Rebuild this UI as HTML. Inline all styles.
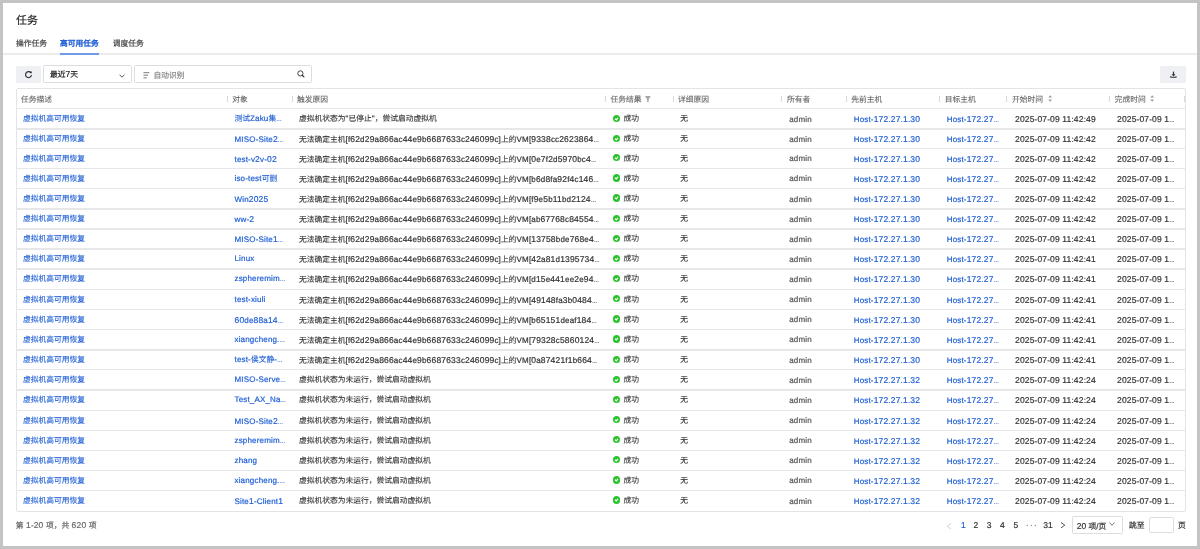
<!DOCTYPE html><html lang="zh-CN"><head><meta charset="utf-8"><style>
*{margin:0;padding:0;box-sizing:border-box}
html,body{width:1200px;height:549px;overflow:hidden;background:#c4c4c4;font-family:"Liberation Sans",sans-serif;text-rendering:geometricPrecision}
#root{position:absolute;left:0;top:0;width:1200px;height:549px;will-change:transform}
#pg{position:absolute;left:3px;top:3px;width:1194px;height:543px;background:#fff;}
.a{position:absolute;white-space:nowrap;-webkit-text-stroke:0.2px}
.t{font-size:8px;line-height:20px;height:20px;}
.t{letter-spacing:0.17px;-webkit-text-stroke:0.2px}
.c{font-size:7.75px;letter-spacing:0}
.t .c{-webkit-text-stroke:0.1px}
.el{font-size:7px;letter-spacing:-0.25px;opacity:.8}
.d{font-size:8.5px}
.lk{color:#1f5fd6}
.dk{color:#333}
.hd{color:#666}
.ad{color:#555;padding-top:0.5px}
.sep{position:absolute;width:1px;height:6px;background:#d8d8d8}
.hl{position:absolute;left:16px;width:1170px;height:1.3px;background:#e7e7e9}
</style></head><body><div id="root">
<div id="pg"></div>
<div class="a" style="left:16px;top:11px;font-size:11px;line-height:20px;color:#222;-webkit-text-stroke:0.15px">任务</div>
<div class="a" style="left:16px;top:34px;font-size:8px;line-height:20px;color:#444;"><span class="c">操作任务</span></div>
<div class="a" style="left:60px;top:34px;font-size:8px;line-height:20px;color:#1f5fd6;-webkit-text-stroke:0.4px"><span class="c">高可用任务</span></div>
<div class="a" style="left:112.7px;top:34px;font-size:8px;line-height:20px;color:#444;"><span class="c">调度任务</span></div>
<div class="a" style="left:3px;top:53.3px;width:1194px;height:1.5px;background:#ececec"></div>
<div class="a" style="left:60px;top:53px;width:39px;height:1.5px;background:#6f9be8"></div>
<div class="a" style="left:16px;top:65.5px;width:25px;height:17.5px;background:#eff0f4;border-radius:1.5px"></div>
<svg class="a" style="left:24px;top:70.3px" width="9" height="9" viewBox="0 0 9 9"><path d="M7.2 3.2A3 3 0 1 0 7.5 5.2" fill="none" stroke="#333" stroke-width="1.15"/><path d="M5.6 1.6L7.8 1.4L7.6 3.6Z" fill="#333"/></svg>
<div class="a" style="left:43.2px;top:65.25px;width:88.6px;height:18px;border:1px solid #dcdde0;border-radius:1.5px"></div>
<div class="a" style="left:50px;top:64.4px;font-size:8px;line-height:20px;color:#222;"><span class="c">最近</span><span class="d">7</span><span class="c">天</span></div>
<svg class="a" style="left:118.5px;top:73.5px" width="6" height="4" viewBox="0 0 6 4"><path d="M0.5 0.7L3 3.2L5.5 0.7" fill="none" stroke="#444" stroke-width="0.9"/></svg>
<div class="a" style="left:134.2px;top:65.25px;width:178px;height:18px;border:1px solid #dcdde0;border-radius:1.5px"></div>
<svg class="a" style="left:142.5px;top:71.5px" width="7" height="7" viewBox="0 0 7 7"><path d="M0.5 0.7H6.3M0.5 3.2H5M0.5 5.8H3.6" fill="none" stroke="#555" stroke-width="0.8"/></svg>
<div class="a" style="left:153.5px;top:65.6px;font-size:8px;line-height:20px;color:#888;"><span class="c">自动识别</span></div>
<svg class="a" style="left:296.5px;top:69.8px" width="8" height="8" viewBox="0 0 8 8"><circle cx="3.4" cy="3.4" r="2.6" fill="none" stroke="#333" stroke-width="0.9"/><path d="M5.2 5.2L6.9 6.9" stroke="#333" stroke-width="1.25" stroke-linecap="round"/></svg>
<div class="a" style="left:1160px;top:65.5px;width:25.5px;height:17.5px;background:#eff0f4;border-radius:1.5px"></div>
<svg class="a" style="left:1169.5px;top:70.5px" width="7" height="8" viewBox="0 0 7 8"><path d="M3.5 0.6V4.2" stroke="#333" stroke-width="1.2"/><path d="M1.5 3.3L3.5 5.6L5.5 3.3Z" fill="#333"/><path d="M0.8 5.3V6.3H6V5.3" fill="none" stroke="#333" stroke-width="1.1"/></svg>
<div class="a" style="left:15.5px;top:88px;width:1170.5px;height:423.5px;border:1px solid #e3e4e7;border-radius:2px"></div>
<div class="a t hd" style="left:21px;top:89.9px"><span class="c">任务描述</span></div>
<div class="sep" style="left:227.0px;top:96px"></div>
<div class="a t hd" style="left:232.3px;top:89.9px"><span class="c">对象</span></div>
<div class="sep" style="left:291.5px;top:96px"></div>
<div class="a t hd" style="left:297px;top:89.9px"><span class="c">触发原因</span></div>
<div class="sep" style="left:604.5px;top:96px"></div>
<div class="a t hd" style="left:610.5px;top:89.9px"><span class="c">任务结果</span></div>
<div class="sep" style="left:672.5px;top:96px"></div>
<div class="a t hd" style="left:678px;top:89.9px"><span class="c">详细原因</span></div>
<div class="sep" style="left:781.2px;top:96px"></div>
<div class="a t hd" style="left:787px;top:89.9px"><span class="c">所有者</span></div>
<div class="sep" style="left:845.8px;top:96px"></div>
<div class="a t hd" style="left:851.3px;top:89.9px"><span class="c">先前主机</span></div>
<div class="sep" style="left:938.7px;top:96px"></div>
<div class="a t hd" style="left:944.7px;top:89.9px"><span class="c">目标主机</span></div>
<div class="sep" style="left:1006.2px;top:96px"></div>
<div class="a t hd" style="left:1012px;top:89.9px"><span class="c">开始时间</span></div>
<div class="sep" style="left:1109.2px;top:96px"></div>
<div class="a t hd" style="left:1114.7px;top:89.9px"><span class="c">完成时间</span></div>
<div class="sep" style="left:1184.2px;top:96px"></div>
<svg class="a" style="left:645.3px;top:95.7px" width="6" height="6.2" viewBox="0 0 6 6.2"><path d="M0 0.1H5.8L3.7 3.4V6.1H2.1V3.4Z" fill="#a8a8a8"/></svg>
<svg class="a" style="left:1047.8px;top:95.1px" width="4.4" height="7" viewBox="0 0 4.4 7"><path d="M0.3 2.5L2.2 0.3L4.1 2.5ZM0.3 4.4L2.2 6.7L4.1 4.4Z" fill="#999"/></svg>
<svg class="a" style="left:1150px;top:95.1px" width="4.4" height="7" viewBox="0 0 4.4 7"><path d="M0.3 2.5L2.2 0.3L4.1 2.5ZM0.3 4.4L2.2 6.7L4.1 4.4Z" fill="#999"/></svg>
<div class="hl" style="top:108.15px"></div>
<div class="hl" style="top:128.25px"></div>
<div class="hl" style="top:147.75px"></div>
<div class="hl" style="top:167.85px"></div>
<div class="hl" style="top:188.05px"></div>
<div class="hl" style="top:208.35px"></div>
<div class="hl" style="top:228.45px"></div>
<div class="hl" style="top:248.45px"></div>
<div class="hl" style="top:268.35px"></div>
<div class="hl" style="top:288.75px"></div>
<div class="hl" style="top:308.85px"></div>
<div class="hl" style="top:328.85px"></div>
<div class="hl" style="top:349.25px"></div>
<div class="hl" style="top:369.15px"></div>
<div class="hl" style="top:389.45px"></div>
<div class="hl" style="top:409.65px"></div>
<div class="hl" style="top:429.65px"></div>
<div class="hl" style="top:449.75px"></div>
<div class="hl" style="top:469.85px"></div>
<div class="hl" style="top:490.05px"></div>
<div class="a t lk" style="left:23px;top:109.10px"><span class="c">虚拟机高可用恢复</span></div>
<div class="a t lk" style="left:234.5px;top:109.10px"><span class="c">测试</span>Zaku<span class="c">集</span><span class="el">...</span></div>
<div class="a t dk" style="left:299px;top:109.10px"><span class="c">虚拟机状态为</span>"<span class="c">已停止</span>"<span class="c">，尝试启动虚拟机</span></div>
<div class="a" style="left:612.8px;top:114.50px;width:7.4px;height:7.4px;border-radius:50%;background:#29c32b"></div><svg class="a" style="left:612.8px;top:114.50px" width="7.4" height="7.4" viewBox="0 0 7.4 7.4"><path d="M2 3.8L3.3 4.9L5 2.8" fill="none" stroke="#fff" stroke-width="1.2"/></svg>
<div class="a t dk" style="left:623.5px;top:109.10px"><span class="c">成功</span></div>
<div class="a t dk" style="left:680.3px;top:109.10px"><span class="c">无</span></div>
<div class="a t ad" style="left:789.2px;top:109.10px">admin</div>
<div class="a t lk" style="left:853.7px;top:109.10px">Host-<span class="d">172</span>.<span class="d">27</span>.<span class="d">1</span>.<span class="d">30</span></div>
<div class="a t lk" style="left:946.7px;top:109.10px">Host-<span class="d">172</span>.<span class="d">27</span><span class="el">...</span></div>
<div class="a t dk" style="left:1015px;top:109.10px"><span class="d">2025</span>-<span class="d">07</span>-<span class="d">09</span> <span class="d">11</span>:<span class="d">42</span>:<span class="d">49</span></div>
<div class="a t dk" style="left:1117px;top:109.10px"><span class="d">2025</span>-<span class="d">07</span>-<span class="d">09</span> <span class="d">1</span><span class="el">...</span></div>
<div class="a t lk" style="left:23px;top:129.20px"><span class="c">虚拟机高可用恢复</span></div>
<div class="a t lk" style="left:234.5px;top:129.20px">MISO-Site<span class="d">2</span><span class="el">...</span></div>
<div class="a t dk" style="left:299px;top:129.20px"><span class="c">无法确定主机</span>[f<span class="d">62</span>d<span class="d">29</span>a<span class="d">866</span>ac<span class="d">44</span>e<span class="d">9</span>b<span class="d">6687633</span>c<span class="d">246099</span>c]<span class="c">上的</span>VM[<span class="d">9338</span>cc<span class="d">2623864</span><span class="el">...</span></div>
<div class="a" style="left:612.8px;top:134.60px;width:7.4px;height:7.4px;border-radius:50%;background:#29c32b"></div><svg class="a" style="left:612.8px;top:134.60px" width="7.4" height="7.4" viewBox="0 0 7.4 7.4"><path d="M2 3.8L3.3 4.9L5 2.8" fill="none" stroke="#fff" stroke-width="1.2"/></svg>
<div class="a t dk" style="left:623.5px;top:129.20px"><span class="c">成功</span></div>
<div class="a t dk" style="left:680.3px;top:129.20px"><span class="c">无</span></div>
<div class="a t ad" style="left:789.2px;top:129.20px">admin</div>
<div class="a t lk" style="left:853.7px;top:129.20px">Host-<span class="d">172</span>.<span class="d">27</span>.<span class="d">1</span>.<span class="d">30</span></div>
<div class="a t lk" style="left:946.7px;top:129.20px">Host-<span class="d">172</span>.<span class="d">27</span><span class="el">...</span></div>
<div class="a t dk" style="left:1015px;top:129.20px"><span class="d">2025</span>-<span class="d">07</span>-<span class="d">09</span> <span class="d">11</span>:<span class="d">42</span>:<span class="d">42</span></div>
<div class="a t dk" style="left:1117px;top:129.20px"><span class="d">2025</span>-<span class="d">07</span>-<span class="d">09</span> <span class="d">1</span><span class="el">...</span></div>
<div class="a t lk" style="left:23px;top:148.70px"><span class="c">虚拟机高可用恢复</span></div>
<div class="a t lk" style="left:234.5px;top:148.70px">test-v<span class="d">2</span>v-<span class="d">02</span></div>
<div class="a t dk" style="left:299px;top:148.70px"><span class="c">无法确定主机</span>[f<span class="d">62</span>d<span class="d">29</span>a<span class="d">866</span>ac<span class="d">44</span>e<span class="d">9</span>b<span class="d">6687633</span>c<span class="d">246099</span>c]<span class="c">上的</span>VM[<span class="d">0</span>e<span class="d">7</span>f<span class="d">2</span>d<span class="d">5970</span>bc<span class="d">4</span><span class="el">...</span></div>
<div class="a" style="left:612.8px;top:154.10px;width:7.4px;height:7.4px;border-radius:50%;background:#29c32b"></div><svg class="a" style="left:612.8px;top:154.10px" width="7.4" height="7.4" viewBox="0 0 7.4 7.4"><path d="M2 3.8L3.3 4.9L5 2.8" fill="none" stroke="#fff" stroke-width="1.2"/></svg>
<div class="a t dk" style="left:623.5px;top:148.70px"><span class="c">成功</span></div>
<div class="a t dk" style="left:680.3px;top:148.70px"><span class="c">无</span></div>
<div class="a t ad" style="left:789.2px;top:148.70px">admin</div>
<div class="a t lk" style="left:853.7px;top:148.70px">Host-<span class="d">172</span>.<span class="d">27</span>.<span class="d">1</span>.<span class="d">30</span></div>
<div class="a t lk" style="left:946.7px;top:148.70px">Host-<span class="d">172</span>.<span class="d">27</span><span class="el">...</span></div>
<div class="a t dk" style="left:1015px;top:148.70px"><span class="d">2025</span>-<span class="d">07</span>-<span class="d">09</span> <span class="d">11</span>:<span class="d">42</span>:<span class="d">42</span></div>
<div class="a t dk" style="left:1117px;top:148.70px"><span class="d">2025</span>-<span class="d">07</span>-<span class="d">09</span> <span class="d">1</span><span class="el">...</span></div>
<div class="a t lk" style="left:23px;top:168.80px"><span class="c">虚拟机高可用恢复</span></div>
<div class="a t lk" style="left:234.5px;top:168.80px">iso-test<span class="c">可删</span></div>
<div class="a t dk" style="left:299px;top:168.80px"><span class="c">无法确定主机</span>[f<span class="d">62</span>d<span class="d">29</span>a<span class="d">866</span>ac<span class="d">44</span>e<span class="d">9</span>b<span class="d">6687633</span>c<span class="d">246099</span>c]<span class="c">上的</span>VM[b<span class="d">6</span>d<span class="d">8</span>fa<span class="d">92</span>f<span class="d">4</span>c<span class="d">146</span><span class="el">...</span></div>
<div class="a" style="left:612.8px;top:174.20px;width:7.4px;height:7.4px;border-radius:50%;background:#29c32b"></div><svg class="a" style="left:612.8px;top:174.20px" width="7.4" height="7.4" viewBox="0 0 7.4 7.4"><path d="M2 3.8L3.3 4.9L5 2.8" fill="none" stroke="#fff" stroke-width="1.2"/></svg>
<div class="a t dk" style="left:623.5px;top:168.80px"><span class="c">成功</span></div>
<div class="a t dk" style="left:680.3px;top:168.80px"><span class="c">无</span></div>
<div class="a t ad" style="left:789.2px;top:168.80px">admin</div>
<div class="a t lk" style="left:853.7px;top:168.80px">Host-<span class="d">172</span>.<span class="d">27</span>.<span class="d">1</span>.<span class="d">30</span></div>
<div class="a t lk" style="left:946.7px;top:168.80px">Host-<span class="d">172</span>.<span class="d">27</span><span class="el">...</span></div>
<div class="a t dk" style="left:1015px;top:168.80px"><span class="d">2025</span>-<span class="d">07</span>-<span class="d">09</span> <span class="d">11</span>:<span class="d">42</span>:<span class="d">42</span></div>
<div class="a t dk" style="left:1117px;top:168.80px"><span class="d">2025</span>-<span class="d">07</span>-<span class="d">09</span> <span class="d">1</span><span class="el">...</span></div>
<div class="a t lk" style="left:23px;top:189.00px"><span class="c">虚拟机高可用恢复</span></div>
<div class="a t lk" style="left:234.5px;top:189.00px">Win<span class="d">2025</span></div>
<div class="a t dk" style="left:299px;top:189.00px"><span class="c">无法确定主机</span>[f<span class="d">62</span>d<span class="d">29</span>a<span class="d">866</span>ac<span class="d">44</span>e<span class="d">9</span>b<span class="d">6687633</span>c<span class="d">246099</span>c]<span class="c">上的</span>VM[f<span class="d">9</span>e<span class="d">5</span>b<span class="d">11</span>bd<span class="d">2124</span><span class="el">...</span></div>
<div class="a" style="left:612.8px;top:194.40px;width:7.4px;height:7.4px;border-radius:50%;background:#29c32b"></div><svg class="a" style="left:612.8px;top:194.40px" width="7.4" height="7.4" viewBox="0 0 7.4 7.4"><path d="M2 3.8L3.3 4.9L5 2.8" fill="none" stroke="#fff" stroke-width="1.2"/></svg>
<div class="a t dk" style="left:623.5px;top:189.00px"><span class="c">成功</span></div>
<div class="a t dk" style="left:680.3px;top:189.00px"><span class="c">无</span></div>
<div class="a t ad" style="left:789.2px;top:189.00px">admin</div>
<div class="a t lk" style="left:853.7px;top:189.00px">Host-<span class="d">172</span>.<span class="d">27</span>.<span class="d">1</span>.<span class="d">30</span></div>
<div class="a t lk" style="left:946.7px;top:189.00px">Host-<span class="d">172</span>.<span class="d">27</span><span class="el">...</span></div>
<div class="a t dk" style="left:1015px;top:189.00px"><span class="d">2025</span>-<span class="d">07</span>-<span class="d">09</span> <span class="d">11</span>:<span class="d">42</span>:<span class="d">42</span></div>
<div class="a t dk" style="left:1117px;top:189.00px"><span class="d">2025</span>-<span class="d">07</span>-<span class="d">09</span> <span class="d">1</span><span class="el">...</span></div>
<div class="a t lk" style="left:23px;top:209.30px"><span class="c">虚拟机高可用恢复</span></div>
<div class="a t lk" style="left:234.5px;top:209.30px">ww-<span class="d">2</span></div>
<div class="a t dk" style="left:299px;top:209.30px"><span class="c">无法确定主机</span>[f<span class="d">62</span>d<span class="d">29</span>a<span class="d">866</span>ac<span class="d">44</span>e<span class="d">9</span>b<span class="d">6687633</span>c<span class="d">246099</span>c]<span class="c">上的</span>VM[ab<span class="d">67768</span>c<span class="d">84554</span><span class="el">...</span></div>
<div class="a" style="left:612.8px;top:214.70px;width:7.4px;height:7.4px;border-radius:50%;background:#29c32b"></div><svg class="a" style="left:612.8px;top:214.70px" width="7.4" height="7.4" viewBox="0 0 7.4 7.4"><path d="M2 3.8L3.3 4.9L5 2.8" fill="none" stroke="#fff" stroke-width="1.2"/></svg>
<div class="a t dk" style="left:623.5px;top:209.30px"><span class="c">成功</span></div>
<div class="a t dk" style="left:680.3px;top:209.30px"><span class="c">无</span></div>
<div class="a t ad" style="left:789.2px;top:209.30px">admin</div>
<div class="a t lk" style="left:853.7px;top:209.30px">Host-<span class="d">172</span>.<span class="d">27</span>.<span class="d">1</span>.<span class="d">30</span></div>
<div class="a t lk" style="left:946.7px;top:209.30px">Host-<span class="d">172</span>.<span class="d">27</span><span class="el">...</span></div>
<div class="a t dk" style="left:1015px;top:209.30px"><span class="d">2025</span>-<span class="d">07</span>-<span class="d">09</span> <span class="d">11</span>:<span class="d">42</span>:<span class="d">42</span></div>
<div class="a t dk" style="left:1117px;top:209.30px"><span class="d">2025</span>-<span class="d">07</span>-<span class="d">09</span> <span class="d">1</span><span class="el">...</span></div>
<div class="a t lk" style="left:23px;top:229.40px"><span class="c">虚拟机高可用恢复</span></div>
<div class="a t lk" style="left:234.5px;top:229.40px">MISO-Site<span class="d">1</span><span class="el">...</span></div>
<div class="a t dk" style="left:299px;top:229.40px"><span class="c">无法确定主机</span>[f<span class="d">62</span>d<span class="d">29</span>a<span class="d">866</span>ac<span class="d">44</span>e<span class="d">9</span>b<span class="d">6687633</span>c<span class="d">246099</span>c]<span class="c">上的</span>VM[<span class="d">13758</span>bde<span class="d">768</span>e<span class="d">4</span><span class="el">...</span></div>
<div class="a" style="left:612.8px;top:234.80px;width:7.4px;height:7.4px;border-radius:50%;background:#29c32b"></div><svg class="a" style="left:612.8px;top:234.80px" width="7.4" height="7.4" viewBox="0 0 7.4 7.4"><path d="M2 3.8L3.3 4.9L5 2.8" fill="none" stroke="#fff" stroke-width="1.2"/></svg>
<div class="a t dk" style="left:623.5px;top:229.40px"><span class="c">成功</span></div>
<div class="a t dk" style="left:680.3px;top:229.40px"><span class="c">无</span></div>
<div class="a t ad" style="left:789.2px;top:229.40px">admin</div>
<div class="a t lk" style="left:853.7px;top:229.40px">Host-<span class="d">172</span>.<span class="d">27</span>.<span class="d">1</span>.<span class="d">30</span></div>
<div class="a t lk" style="left:946.7px;top:229.40px">Host-<span class="d">172</span>.<span class="d">27</span><span class="el">...</span></div>
<div class="a t dk" style="left:1015px;top:229.40px"><span class="d">2025</span>-<span class="d">07</span>-<span class="d">09</span> <span class="d">11</span>:<span class="d">42</span>:<span class="d">41</span></div>
<div class="a t dk" style="left:1117px;top:229.40px"><span class="d">2025</span>-<span class="d">07</span>-<span class="d">09</span> <span class="d">1</span><span class="el">...</span></div>
<div class="a t lk" style="left:23px;top:249.40px"><span class="c">虚拟机高可用恢复</span></div>
<div class="a t lk" style="left:234.5px;top:249.40px">Linux</div>
<div class="a t dk" style="left:299px;top:249.40px"><span class="c">无法确定主机</span>[f<span class="d">62</span>d<span class="d">29</span>a<span class="d">866</span>ac<span class="d">44</span>e<span class="d">9</span>b<span class="d">6687633</span>c<span class="d">246099</span>c]<span class="c">上的</span>VM[<span class="d">42</span>a<span class="d">81</span>d<span class="d">1395734</span><span class="el">...</span></div>
<div class="a" style="left:612.8px;top:254.80px;width:7.4px;height:7.4px;border-radius:50%;background:#29c32b"></div><svg class="a" style="left:612.8px;top:254.80px" width="7.4" height="7.4" viewBox="0 0 7.4 7.4"><path d="M2 3.8L3.3 4.9L5 2.8" fill="none" stroke="#fff" stroke-width="1.2"/></svg>
<div class="a t dk" style="left:623.5px;top:249.40px"><span class="c">成功</span></div>
<div class="a t dk" style="left:680.3px;top:249.40px"><span class="c">无</span></div>
<div class="a t ad" style="left:789.2px;top:249.40px">admin</div>
<div class="a t lk" style="left:853.7px;top:249.40px">Host-<span class="d">172</span>.<span class="d">27</span>.<span class="d">1</span>.<span class="d">30</span></div>
<div class="a t lk" style="left:946.7px;top:249.40px">Host-<span class="d">172</span>.<span class="d">27</span><span class="el">...</span></div>
<div class="a t dk" style="left:1015px;top:249.40px"><span class="d">2025</span>-<span class="d">07</span>-<span class="d">09</span> <span class="d">11</span>:<span class="d">42</span>:<span class="d">41</span></div>
<div class="a t dk" style="left:1117px;top:249.40px"><span class="d">2025</span>-<span class="d">07</span>-<span class="d">09</span> <span class="d">1</span><span class="el">...</span></div>
<div class="a t lk" style="left:23px;top:269.30px"><span class="c">虚拟机高可用恢复</span></div>
<div class="a t lk" style="left:234.5px;top:269.30px">zspheremim<span class="el">...</span></div>
<div class="a t dk" style="left:299px;top:269.30px"><span class="c">无法确定主机</span>[f<span class="d">62</span>d<span class="d">29</span>a<span class="d">866</span>ac<span class="d">44</span>e<span class="d">9</span>b<span class="d">6687633</span>c<span class="d">246099</span>c]<span class="c">上的</span>VM[d<span class="d">15</span>e<span class="d">441</span>ee<span class="d">2</span>e<span class="d">94</span><span class="el">...</span></div>
<div class="a" style="left:612.8px;top:274.70px;width:7.4px;height:7.4px;border-radius:50%;background:#29c32b"></div><svg class="a" style="left:612.8px;top:274.70px" width="7.4" height="7.4" viewBox="0 0 7.4 7.4"><path d="M2 3.8L3.3 4.9L5 2.8" fill="none" stroke="#fff" stroke-width="1.2"/></svg>
<div class="a t dk" style="left:623.5px;top:269.30px"><span class="c">成功</span></div>
<div class="a t dk" style="left:680.3px;top:269.30px"><span class="c">无</span></div>
<div class="a t ad" style="left:789.2px;top:269.30px">admin</div>
<div class="a t lk" style="left:853.7px;top:269.30px">Host-<span class="d">172</span>.<span class="d">27</span>.<span class="d">1</span>.<span class="d">30</span></div>
<div class="a t lk" style="left:946.7px;top:269.30px">Host-<span class="d">172</span>.<span class="d">27</span><span class="el">...</span></div>
<div class="a t dk" style="left:1015px;top:269.30px"><span class="d">2025</span>-<span class="d">07</span>-<span class="d">09</span> <span class="d">11</span>:<span class="d">42</span>:<span class="d">41</span></div>
<div class="a t dk" style="left:1117px;top:269.30px"><span class="d">2025</span>-<span class="d">07</span>-<span class="d">09</span> <span class="d">1</span><span class="el">...</span></div>
<div class="a t lk" style="left:23px;top:289.70px"><span class="c">虚拟机高可用恢复</span></div>
<div class="a t lk" style="left:234.5px;top:289.70px">test-xiuli</div>
<div class="a t dk" style="left:299px;top:289.70px"><span class="c">无法确定主机</span>[f<span class="d">62</span>d<span class="d">29</span>a<span class="d">866</span>ac<span class="d">44</span>e<span class="d">9</span>b<span class="d">6687633</span>c<span class="d">246099</span>c]<span class="c">上的</span>VM[<span class="d">49148</span>fa<span class="d">3</span>b<span class="d">0484</span><span class="el">...</span></div>
<div class="a" style="left:612.8px;top:295.10px;width:7.4px;height:7.4px;border-radius:50%;background:#29c32b"></div><svg class="a" style="left:612.8px;top:295.10px" width="7.4" height="7.4" viewBox="0 0 7.4 7.4"><path d="M2 3.8L3.3 4.9L5 2.8" fill="none" stroke="#fff" stroke-width="1.2"/></svg>
<div class="a t dk" style="left:623.5px;top:289.70px"><span class="c">成功</span></div>
<div class="a t dk" style="left:680.3px;top:289.70px"><span class="c">无</span></div>
<div class="a t ad" style="left:789.2px;top:289.70px">admin</div>
<div class="a t lk" style="left:853.7px;top:289.70px">Host-<span class="d">172</span>.<span class="d">27</span>.<span class="d">1</span>.<span class="d">30</span></div>
<div class="a t lk" style="left:946.7px;top:289.70px">Host-<span class="d">172</span>.<span class="d">27</span><span class="el">...</span></div>
<div class="a t dk" style="left:1015px;top:289.70px"><span class="d">2025</span>-<span class="d">07</span>-<span class="d">09</span> <span class="d">11</span>:<span class="d">42</span>:<span class="d">41</span></div>
<div class="a t dk" style="left:1117px;top:289.70px"><span class="d">2025</span>-<span class="d">07</span>-<span class="d">09</span> <span class="d">1</span><span class="el">...</span></div>
<div class="a t lk" style="left:23px;top:309.80px"><span class="c">虚拟机高可用恢复</span></div>
<div class="a t lk" style="left:234.5px;top:309.80px"><span class="d">60</span>de<span class="d">88</span>a<span class="d">14</span><span class="el">...</span></div>
<div class="a t dk" style="left:299px;top:309.80px"><span class="c">无法确定主机</span>[f<span class="d">62</span>d<span class="d">29</span>a<span class="d">866</span>ac<span class="d">44</span>e<span class="d">9</span>b<span class="d">6687633</span>c<span class="d">246099</span>c]<span class="c">上的</span>VM[b<span class="d">65151</span>deaf<span class="d">184</span><span class="el">...</span></div>
<div class="a" style="left:612.8px;top:315.20px;width:7.4px;height:7.4px;border-radius:50%;background:#29c32b"></div><svg class="a" style="left:612.8px;top:315.20px" width="7.4" height="7.4" viewBox="0 0 7.4 7.4"><path d="M2 3.8L3.3 4.9L5 2.8" fill="none" stroke="#fff" stroke-width="1.2"/></svg>
<div class="a t dk" style="left:623.5px;top:309.80px"><span class="c">成功</span></div>
<div class="a t dk" style="left:680.3px;top:309.80px"><span class="c">无</span></div>
<div class="a t ad" style="left:789.2px;top:309.80px">admin</div>
<div class="a t lk" style="left:853.7px;top:309.80px">Host-<span class="d">172</span>.<span class="d">27</span>.<span class="d">1</span>.<span class="d">30</span></div>
<div class="a t lk" style="left:946.7px;top:309.80px">Host-<span class="d">172</span>.<span class="d">27</span><span class="el">...</span></div>
<div class="a t dk" style="left:1015px;top:309.80px"><span class="d">2025</span>-<span class="d">07</span>-<span class="d">09</span> <span class="d">11</span>:<span class="d">42</span>:<span class="d">41</span></div>
<div class="a t dk" style="left:1117px;top:309.80px"><span class="d">2025</span>-<span class="d">07</span>-<span class="d">09</span> <span class="d">1</span><span class="el">...</span></div>
<div class="a t lk" style="left:23px;top:329.80px"><span class="c">虚拟机高可用恢复</span></div>
<div class="a t lk" style="left:234.5px;top:329.80px">xiangcheng.<span class="el">...</span></div>
<div class="a t dk" style="left:299px;top:329.80px"><span class="c">无法确定主机</span>[f<span class="d">62</span>d<span class="d">29</span>a<span class="d">866</span>ac<span class="d">44</span>e<span class="d">9</span>b<span class="d">6687633</span>c<span class="d">246099</span>c]<span class="c">上的</span>VM[<span class="d">79328</span>c<span class="d">5860124</span><span class="el">...</span></div>
<div class="a" style="left:612.8px;top:335.20px;width:7.4px;height:7.4px;border-radius:50%;background:#29c32b"></div><svg class="a" style="left:612.8px;top:335.20px" width="7.4" height="7.4" viewBox="0 0 7.4 7.4"><path d="M2 3.8L3.3 4.9L5 2.8" fill="none" stroke="#fff" stroke-width="1.2"/></svg>
<div class="a t dk" style="left:623.5px;top:329.80px"><span class="c">成功</span></div>
<div class="a t dk" style="left:680.3px;top:329.80px"><span class="c">无</span></div>
<div class="a t ad" style="left:789.2px;top:329.80px">admin</div>
<div class="a t lk" style="left:853.7px;top:329.80px">Host-<span class="d">172</span>.<span class="d">27</span>.<span class="d">1</span>.<span class="d">30</span></div>
<div class="a t lk" style="left:946.7px;top:329.80px">Host-<span class="d">172</span>.<span class="d">27</span><span class="el">...</span></div>
<div class="a t dk" style="left:1015px;top:329.80px"><span class="d">2025</span>-<span class="d">07</span>-<span class="d">09</span> <span class="d">11</span>:<span class="d">42</span>:<span class="d">41</span></div>
<div class="a t dk" style="left:1117px;top:329.80px"><span class="d">2025</span>-<span class="d">07</span>-<span class="d">09</span> <span class="d">1</span><span class="el">...</span></div>
<div class="a t lk" style="left:23px;top:350.20px"><span class="c">虚拟机高可用恢复</span></div>
<div class="a t lk" style="left:234.5px;top:350.20px">test-<span class="c">侯文静</span>-<span class="el">...</span></div>
<div class="a t dk" style="left:299px;top:350.20px"><span class="c">无法确定主机</span>[f<span class="d">62</span>d<span class="d">29</span>a<span class="d">866</span>ac<span class="d">44</span>e<span class="d">9</span>b<span class="d">6687633</span>c<span class="d">246099</span>c]<span class="c">上的</span>VM[<span class="d">0</span>a<span class="d">87421</span>f<span class="d">1</span>b<span class="d">664</span><span class="el">...</span></div>
<div class="a" style="left:612.8px;top:355.60px;width:7.4px;height:7.4px;border-radius:50%;background:#29c32b"></div><svg class="a" style="left:612.8px;top:355.60px" width="7.4" height="7.4" viewBox="0 0 7.4 7.4"><path d="M2 3.8L3.3 4.9L5 2.8" fill="none" stroke="#fff" stroke-width="1.2"/></svg>
<div class="a t dk" style="left:623.5px;top:350.20px"><span class="c">成功</span></div>
<div class="a t dk" style="left:680.3px;top:350.20px"><span class="c">无</span></div>
<div class="a t ad" style="left:789.2px;top:350.20px">admin</div>
<div class="a t lk" style="left:853.7px;top:350.20px">Host-<span class="d">172</span>.<span class="d">27</span>.<span class="d">1</span>.<span class="d">30</span></div>
<div class="a t lk" style="left:946.7px;top:350.20px">Host-<span class="d">172</span>.<span class="d">27</span><span class="el">...</span></div>
<div class="a t dk" style="left:1015px;top:350.20px"><span class="d">2025</span>-<span class="d">07</span>-<span class="d">09</span> <span class="d">11</span>:<span class="d">42</span>:<span class="d">41</span></div>
<div class="a t dk" style="left:1117px;top:350.20px"><span class="d">2025</span>-<span class="d">07</span>-<span class="d">09</span> <span class="d">1</span><span class="el">...</span></div>
<div class="a t lk" style="left:23px;top:370.10px"><span class="c">虚拟机高可用恢复</span></div>
<div class="a t lk" style="left:234.5px;top:370.10px">MISO-Serve<span class="el">...</span></div>
<div class="a t dk" style="left:299px;top:370.10px"><span class="c">虚拟机状态为未运行，尝试启动虚拟机</span></div>
<div class="a" style="left:612.8px;top:375.50px;width:7.4px;height:7.4px;border-radius:50%;background:#29c32b"></div><svg class="a" style="left:612.8px;top:375.50px" width="7.4" height="7.4" viewBox="0 0 7.4 7.4"><path d="M2 3.8L3.3 4.9L5 2.8" fill="none" stroke="#fff" stroke-width="1.2"/></svg>
<div class="a t dk" style="left:623.5px;top:370.10px"><span class="c">成功</span></div>
<div class="a t dk" style="left:680.3px;top:370.10px"><span class="c">无</span></div>
<div class="a t ad" style="left:789.2px;top:370.10px">admin</div>
<div class="a t lk" style="left:853.7px;top:370.10px">Host-<span class="d">172</span>.<span class="d">27</span>.<span class="d">1</span>.<span class="d">32</span></div>
<div class="a t lk" style="left:946.7px;top:370.10px">Host-<span class="d">172</span>.<span class="d">27</span><span class="el">...</span></div>
<div class="a t dk" style="left:1015px;top:370.10px"><span class="d">2025</span>-<span class="d">07</span>-<span class="d">09</span> <span class="d">11</span>:<span class="d">42</span>:<span class="d">24</span></div>
<div class="a t dk" style="left:1117px;top:370.10px"><span class="d">2025</span>-<span class="d">07</span>-<span class="d">09</span> <span class="d">1</span><span class="el">...</span></div>
<div class="a t lk" style="left:23px;top:390.40px"><span class="c">虚拟机高可用恢复</span></div>
<div class="a t lk" style="left:234.5px;top:390.40px">Test_AX_Na<span class="el">...</span></div>
<div class="a t dk" style="left:299px;top:390.40px"><span class="c">虚拟机状态为未运行，尝试启动虚拟机</span></div>
<div class="a" style="left:612.8px;top:395.80px;width:7.4px;height:7.4px;border-radius:50%;background:#29c32b"></div><svg class="a" style="left:612.8px;top:395.80px" width="7.4" height="7.4" viewBox="0 0 7.4 7.4"><path d="M2 3.8L3.3 4.9L5 2.8" fill="none" stroke="#fff" stroke-width="1.2"/></svg>
<div class="a t dk" style="left:623.5px;top:390.40px"><span class="c">成功</span></div>
<div class="a t dk" style="left:680.3px;top:390.40px"><span class="c">无</span></div>
<div class="a t ad" style="left:789.2px;top:390.40px">admin</div>
<div class="a t lk" style="left:853.7px;top:390.40px">Host-<span class="d">172</span>.<span class="d">27</span>.<span class="d">1</span>.<span class="d">32</span></div>
<div class="a t lk" style="left:946.7px;top:390.40px">Host-<span class="d">172</span>.<span class="d">27</span><span class="el">...</span></div>
<div class="a t dk" style="left:1015px;top:390.40px"><span class="d">2025</span>-<span class="d">07</span>-<span class="d">09</span> <span class="d">11</span>:<span class="d">42</span>:<span class="d">24</span></div>
<div class="a t dk" style="left:1117px;top:390.40px"><span class="d">2025</span>-<span class="d">07</span>-<span class="d">09</span> <span class="d">1</span><span class="el">...</span></div>
<div class="a t lk" style="left:23px;top:410.60px"><span class="c">虚拟机高可用恢复</span></div>
<div class="a t lk" style="left:234.5px;top:410.60px">MISO-Site<span class="d">2</span><span class="el">...</span></div>
<div class="a t dk" style="left:299px;top:410.60px"><span class="c">虚拟机状态为未运行，尝试启动虚拟机</span></div>
<div class="a" style="left:612.8px;top:416.00px;width:7.4px;height:7.4px;border-radius:50%;background:#29c32b"></div><svg class="a" style="left:612.8px;top:416.00px" width="7.4" height="7.4" viewBox="0 0 7.4 7.4"><path d="M2 3.8L3.3 4.9L5 2.8" fill="none" stroke="#fff" stroke-width="1.2"/></svg>
<div class="a t dk" style="left:623.5px;top:410.60px"><span class="c">成功</span></div>
<div class="a t dk" style="left:680.3px;top:410.60px"><span class="c">无</span></div>
<div class="a t ad" style="left:789.2px;top:410.60px">admin</div>
<div class="a t lk" style="left:853.7px;top:410.60px">Host-<span class="d">172</span>.<span class="d">27</span>.<span class="d">1</span>.<span class="d">32</span></div>
<div class="a t lk" style="left:946.7px;top:410.60px">Host-<span class="d">172</span>.<span class="d">27</span><span class="el">...</span></div>
<div class="a t dk" style="left:1015px;top:410.60px"><span class="d">2025</span>-<span class="d">07</span>-<span class="d">09</span> <span class="d">11</span>:<span class="d">42</span>:<span class="d">24</span></div>
<div class="a t dk" style="left:1117px;top:410.60px"><span class="d">2025</span>-<span class="d">07</span>-<span class="d">09</span> <span class="d">1</span><span class="el">...</span></div>
<div class="a t lk" style="left:23px;top:430.60px"><span class="c">虚拟机高可用恢复</span></div>
<div class="a t lk" style="left:234.5px;top:430.60px">zspheremim<span class="el">...</span></div>
<div class="a t dk" style="left:299px;top:430.60px"><span class="c">虚拟机状态为未运行，尝试启动虚拟机</span></div>
<div class="a" style="left:612.8px;top:436.00px;width:7.4px;height:7.4px;border-radius:50%;background:#29c32b"></div><svg class="a" style="left:612.8px;top:436.00px" width="7.4" height="7.4" viewBox="0 0 7.4 7.4"><path d="M2 3.8L3.3 4.9L5 2.8" fill="none" stroke="#fff" stroke-width="1.2"/></svg>
<div class="a t dk" style="left:623.5px;top:430.60px"><span class="c">成功</span></div>
<div class="a t dk" style="left:680.3px;top:430.60px"><span class="c">无</span></div>
<div class="a t ad" style="left:789.2px;top:430.60px">admin</div>
<div class="a t lk" style="left:853.7px;top:430.60px">Host-<span class="d">172</span>.<span class="d">27</span>.<span class="d">1</span>.<span class="d">32</span></div>
<div class="a t lk" style="left:946.7px;top:430.60px">Host-<span class="d">172</span>.<span class="d">27</span><span class="el">...</span></div>
<div class="a t dk" style="left:1015px;top:430.60px"><span class="d">2025</span>-<span class="d">07</span>-<span class="d">09</span> <span class="d">11</span>:<span class="d">42</span>:<span class="d">24</span></div>
<div class="a t dk" style="left:1117px;top:430.60px"><span class="d">2025</span>-<span class="d">07</span>-<span class="d">09</span> <span class="d">1</span><span class="el">...</span></div>
<div class="a t lk" style="left:23px;top:450.70px"><span class="c">虚拟机高可用恢复</span></div>
<div class="a t lk" style="left:234.5px;top:450.70px">zhang</div>
<div class="a t dk" style="left:299px;top:450.70px"><span class="c">虚拟机状态为未运行，尝试启动虚拟机</span></div>
<div class="a" style="left:612.8px;top:456.10px;width:7.4px;height:7.4px;border-radius:50%;background:#29c32b"></div><svg class="a" style="left:612.8px;top:456.10px" width="7.4" height="7.4" viewBox="0 0 7.4 7.4"><path d="M2 3.8L3.3 4.9L5 2.8" fill="none" stroke="#fff" stroke-width="1.2"/></svg>
<div class="a t dk" style="left:623.5px;top:450.70px"><span class="c">成功</span></div>
<div class="a t dk" style="left:680.3px;top:450.70px"><span class="c">无</span></div>
<div class="a t ad" style="left:789.2px;top:450.70px">admin</div>
<div class="a t lk" style="left:853.7px;top:450.70px">Host-<span class="d">172</span>.<span class="d">27</span>.<span class="d">1</span>.<span class="d">32</span></div>
<div class="a t lk" style="left:946.7px;top:450.70px">Host-<span class="d">172</span>.<span class="d">27</span><span class="el">...</span></div>
<div class="a t dk" style="left:1015px;top:450.70px"><span class="d">2025</span>-<span class="d">07</span>-<span class="d">09</span> <span class="d">11</span>:<span class="d">42</span>:<span class="d">24</span></div>
<div class="a t dk" style="left:1117px;top:450.70px"><span class="d">2025</span>-<span class="d">07</span>-<span class="d">09</span> <span class="d">1</span><span class="el">...</span></div>
<div class="a t lk" style="left:23px;top:470.80px"><span class="c">虚拟机高可用恢复</span></div>
<div class="a t lk" style="left:234.5px;top:470.80px">xiangcheng.<span class="el">...</span></div>
<div class="a t dk" style="left:299px;top:470.80px"><span class="c">虚拟机状态为未运行，尝试启动虚拟机</span></div>
<div class="a" style="left:612.8px;top:476.20px;width:7.4px;height:7.4px;border-radius:50%;background:#29c32b"></div><svg class="a" style="left:612.8px;top:476.20px" width="7.4" height="7.4" viewBox="0 0 7.4 7.4"><path d="M2 3.8L3.3 4.9L5 2.8" fill="none" stroke="#fff" stroke-width="1.2"/></svg>
<div class="a t dk" style="left:623.5px;top:470.80px"><span class="c">成功</span></div>
<div class="a t dk" style="left:680.3px;top:470.80px"><span class="c">无</span></div>
<div class="a t ad" style="left:789.2px;top:470.80px">admin</div>
<div class="a t lk" style="left:853.7px;top:470.80px">Host-<span class="d">172</span>.<span class="d">27</span>.<span class="d">1</span>.<span class="d">32</span></div>
<div class="a t lk" style="left:946.7px;top:470.80px">Host-<span class="d">172</span>.<span class="d">27</span><span class="el">...</span></div>
<div class="a t dk" style="left:1015px;top:470.80px"><span class="d">2025</span>-<span class="d">07</span>-<span class="d">09</span> <span class="d">11</span>:<span class="d">42</span>:<span class="d">24</span></div>
<div class="a t dk" style="left:1117px;top:470.80px"><span class="d">2025</span>-<span class="d">07</span>-<span class="d">09</span> <span class="d">1</span><span class="el">...</span></div>
<div class="a t lk" style="left:23px;top:491.00px"><span class="c">虚拟机高可用恢复</span></div>
<div class="a t lk" style="left:234.5px;top:491.00px">Site<span class="d">1</span>-Client<span class="d">1</span></div>
<div class="a t dk" style="left:299px;top:491.00px"><span class="c">虚拟机状态为未运行，尝试启动虚拟机</span></div>
<div class="a" style="left:612.8px;top:496.40px;width:7.4px;height:7.4px;border-radius:50%;background:#29c32b"></div><svg class="a" style="left:612.8px;top:496.40px" width="7.4" height="7.4" viewBox="0 0 7.4 7.4"><path d="M2 3.8L3.3 4.9L5 2.8" fill="none" stroke="#fff" stroke-width="1.2"/></svg>
<div class="a t dk" style="left:623.5px;top:491.00px"><span class="c">成功</span></div>
<div class="a t dk" style="left:680.3px;top:491.00px"><span class="c">无</span></div>
<div class="a t ad" style="left:789.2px;top:491.00px">admin</div>
<div class="a t lk" style="left:853.7px;top:491.00px">Host-<span class="d">172</span>.<span class="d">27</span>.<span class="d">1</span>.<span class="d">32</span></div>
<div class="a t lk" style="left:946.7px;top:491.00px">Host-<span class="d">172</span>.<span class="d">27</span><span class="el">...</span></div>
<div class="a t dk" style="left:1015px;top:491.00px"><span class="d">2025</span>-<span class="d">07</span>-<span class="d">09</span> <span class="d">11</span>:<span class="d">42</span>:<span class="d">24</span></div>
<div class="a t dk" style="left:1117px;top:491.00px"><span class="d">2025</span>-<span class="d">07</span>-<span class="d">09</span> <span class="d">1</span><span class="el">...</span></div>
<div class="a" style="left:15.8px;top:515px;font-size:8px;line-height:20px;color:#666;letter-spacing:0.17px"><span class="c">第</span> <span class="d">1</span>-<span class="d">20</span> <span class="c">项，共</span> <span class="d">620</span> <span class="c">项</span></div>
<svg class="a" style="left:946px;top:522.5px" width="6" height="7" viewBox="0 0 6 7"><path d="M5 0.5L1.2 3.2L5 5.9" fill="none" stroke="#c4c4c4" stroke-width="0.8"/></svg>
<div class="a" style="left:961px;top:515px;font-size:8px;line-height:20px;color:#1f5fd6;"><span class="d">1</span></div>
<div class="a" style="left:973.5px;top:515px;font-size:8px;line-height:20px;color:#333;"><span class="d">2</span></div>
<div class="a" style="left:986.7px;top:515px;font-size:8px;line-height:20px;color:#333;"><span class="d">3</span></div>
<div class="a" style="left:1000px;top:515px;font-size:8px;line-height:20px;color:#333;"><span class="d">4</span></div>
<div class="a" style="left:1013.5px;top:515px;font-size:8px;line-height:20px;color:#333;"><span class="d">5</span></div>
<div class="a" style="left:1043.3px;top:515px;font-size:8px;line-height:20px;color:#333;"><span class="d">31</span></div>
<svg class="a" style="left:1025.5px;top:523.6px" width="11" height="3" viewBox="0 0 11 3"><circle cx="1.3" cy="1.5" r="0.75" fill="#9a9a9a"/><circle cx="5.3" cy="1.5" r="0.75" fill="#9a9a9a"/><circle cx="9.3" cy="1.5" r="0.75" fill="#9a9a9a"/></svg>
<svg class="a" style="left:1060px;top:522px" width="6" height="7" viewBox="0 0 6 7"><path d="M1 0.5L4.8 3.2L1 5.9" fill="none" stroke="#333" stroke-width="0.85"/></svg>
<div class="a" style="left:1072.4px;top:516.3px;width:50.6px;height:18px;border:1px solid #dcdde0;border-radius:1.5px"></div>
<div class="a" style="left:1076.8px;top:515.8px;font-size:8px;line-height:20px;color:#333;"><span class="d">20</span> <span class="c">项</span>/<span class="c">页</span></div>
<svg class="a" style="left:1108.8px;top:522.4px" width="6" height="4" viewBox="0 0 6 4"><path d="M0.5 0.5L3 3.3L5.5 0.5" fill="none" stroke="#555" stroke-width="0.8"/></svg>
<div class="a" style="left:1129px;top:516px;font-size:8px;line-height:20px;color:#333;"><span class="c">跳至</span></div>
<div class="a" style="left:1149.3px;top:516.8px;width:24.4px;height:16.7px;border:1px solid #dcdde0;border-radius:1.5px"></div>
<div class="a" style="left:1178px;top:516px;font-size:8px;line-height:20px;color:#333;"><span class="c">页</span></div>
</div></body></html>
